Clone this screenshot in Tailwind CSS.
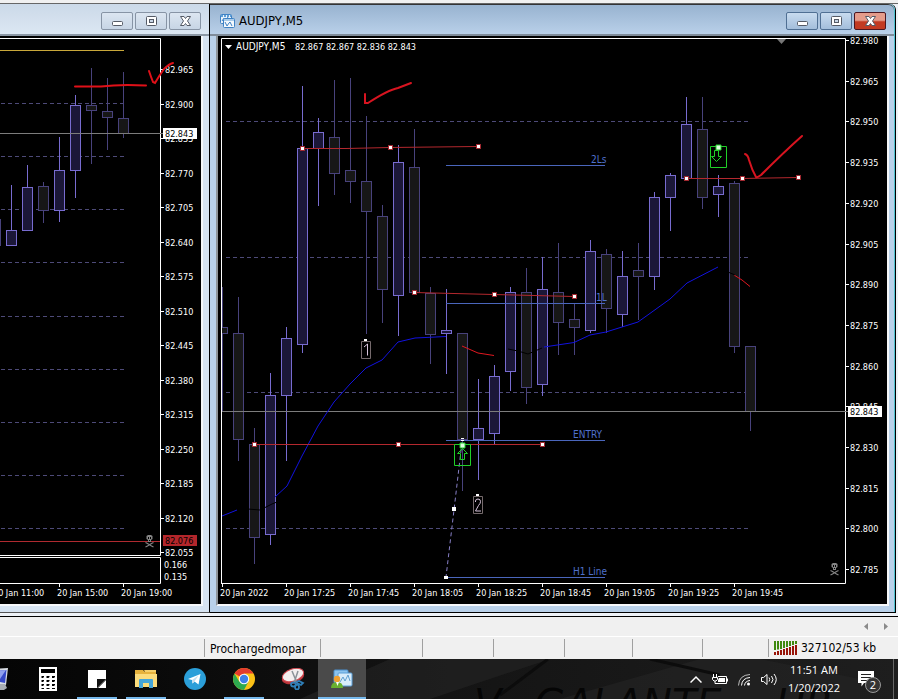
<!DOCTYPE html>
<html lang="en">
<head>
<meta charset="utf-8">
<meta name="viewport" content="width=device-width, initial-scale=1">
<title>AUDJPY,M5</title>
<script src="https://cdn.jsdelivr.net/npm/@tailwindcss/browser@4"></script>
</head>
<body class="flex min-h-screen flex-col overflow-x-hidden bg-[#f0f0f0] font-['DejaVu_Sans_Condensed','DejaVu_Sans',sans-serif] text-black">

<svg class="hidden" aria-hidden="true">
  <defs>
    <symbol id="i-min" viewBox="0 0 13 12"><rect x="1.5" y="6.500" width="10" height="4" rx="1" fill="#fff" stroke="#555b66"/></symbol>
    <symbol id="i-max" viewBox="0 0 13 12"><rect x="1.500" y="1.500" width="10" height="9" rx="1" fill="#fff" stroke="#555b66"/><rect x="4.500" y="4.500" width="4" height="3" fill="#c9d6e6" stroke="#555b66"/></symbol>
    <symbol id="i-close" viewBox="0 0 13 12"><path d="M1.500 1.500h3.500l1.500 2 1.500-2h3.500l-3 4.500 3 4.500H8l-1.500-2-1.500 2H1.500l3-4.500z" fill="#fff" stroke="#555b66"/></symbol>
    <symbol id="i-skull" viewBox="0 0 9 13"><path d="M3 0h3l1.500 1v3L6 5v2H3V5L1.500 4V1z" fill="#858585"/><path d="M3 2h1v2H3zM5 2h1v2H5zM4 5h1v1H4z" fill="#000"/><path d="M.5 7.500l2 1 4 2.500 2 1M8.500 7.500l-2 1-4 2.500-2 1" fill="none" stroke="#858585" stroke-width="1.200"/></symbol>
  </defs>
</svg>

<main class="flex grow flex-col border-b border-black bg-[#eef2f7]">
  <div class="h-1 border-b border-[#666] bg-[#f0f0f0]"></div>
  <div class="grid grid-cols-[210fr_688fr] pb-[3px]">

    <section aria-label="Chart window 1" class="border-r border-b border-r-black border-b-[#555] bg-[#d7e4f2]">
      <header class="flex h-8 items-center justify-end gap-[2px] border-b-2 border-[#8c98a5] bg-linear-to-b from-[#cbd9e8] to-[#dce7f3] pt-1 pr-2">
        <button aria-label="Minimize" class="grid h-[18px] w-8 place-items-center rounded-[2px] border border-[#8794a5] bg-linear-to-b from-[#dce6f1] to-[#c7d5e5]"><svg class="h-3 w-[13px]"><use href="#i-min"/></svg></button>
        <button aria-label="Maximize" class="grid h-[18px] w-8 place-items-center rounded-[2px] border border-[#8794a5] bg-linear-to-b from-[#dce6f1] to-[#c7d5e5]"><svg class="h-3 w-[13px]"><use href="#i-max"/></svg></button>
        <button aria-label="Close" class="grid h-[18px] w-8 place-items-center rounded-[2px] border border-[#8794a5] bg-linear-to-b from-[#dce6f1] to-[#c7d5e5]"><svg class="h-3 w-[13px]"><use href="#i-close"/></svg></button>
      </header>
      <div class="pr-[6px] pb-[6px]">
        <div class="border-r-2 border-b-2 border-[#f6f8fa] bg-black">
          <svg id="left" class="block w-full text-[9px]" viewBox="0 36 201 568" role="img" aria-label="AUDJPY hourly chart">
            <g id="left-data"></g>
            <path d="M0 38.500H160.500V555.500H0M0 557.500H160.500V583.500H0" fill="none" stroke="#fff"/>
            <path d="M0 50.500H124" stroke="#c9a83a"/>
            <path d="M0 133.500H163" stroke="#7c7c7c"/>
            <path d="M0 541.500H160" stroke="#b02a30"/>
            <use href="#i-skull" x="145" y="535" width="9" height="13"/>
            <rect x="163" y="128" width="34" height="11" fill="#fff"/><text x="165" y="137" fill="#000">82.843</text>
            <rect x="163" y="535" width="34" height="11" fill="#b3262b"/><text x="165" y="544" fill="#000">82.076</text>
            <path d="M75 86.500L101 86.500Q120 84 146 85.500M149 71Q151 77 153 82L155 83Q159 76 164 69Q169 64 173 63" fill="none" stroke="#e01018" stroke-width="2" stroke-linecap="round"/>
          </svg>
        </div>
      </div>
    </section>

    <section aria-label="AUDJPY,M5" class="mr-[2px] rounded-tr-md border-r border-b border-black bg-[#b9d1ea]">
      <div class="rounded-tr-md border-r border-[#4fc3d0]">
        <header class="flex h-8 items-center gap-[2px] rounded-tr-md border-t border-b-2 border-t-[#333] border-b-[#7f8c9a] bg-linear-to-b from-[#98b3d0] to-[#b9d0e9] pt-[3px] pr-2 pl-[10px]">
          <svg class="h-[14px] w-[15px]" viewBox="0 0 15 14" aria-hidden="true"><rect x=".5" y=".5" width="11" height="9" rx="1" fill="#e9f2fb" stroke="#3f82c4"/><path d="M2 7l2-3 2 2 2-3" stroke="#3f82c4" fill="none"/><path d="M1 2h10" stroke="#5f9fd8" stroke-width="2" stroke-dasharray="2 1"/><rect x="3.500" y="4.500" width="11" height="9" rx="1" fill="#f4f9fd" stroke="#3f82c4"/><path d="M4 6h10" stroke="#5f9fd8"/><path d="M5 8l2 4 2-3 1-1 2 4" stroke="#3f82c4" fill="none"/></svg>
          <h1 class="grow pl-[2px] text-[13px] leading-4">AUDJPY,M5</h1>
          <button aria-label="Minimize" class="grid h-[18px] w-8 place-items-center rounded-[2px] border border-[#4f6f93] bg-linear-to-b from-[#c8dbef] to-[#a3bedb]"><svg class="h-3 w-[13px]"><use href="#i-min"/></svg></button>
          <button aria-label="Maximize" class="grid h-[18px] w-8 place-items-center rounded-[2px] border border-[#4f6f93] bg-linear-to-b from-[#c8dbef] to-[#a3bedb]"><svg class="h-3 w-[13px]"><use href="#i-max"/></svg></button>
          <button aria-label="Close" class="grid h-[18px] w-8 place-items-center rounded-[2px] border border-[#4c1620] bg-linear-to-b from-[#e59c8b] from-45% to-[#c23a22] to-55%"><svg class="h-3 w-[13px]"><use href="#i-close"/></svg></button>
        </header>
        <div class="pr-[5px] pb-[6px] pl-[6px]">
          <div class="border-r-2 border-b-2 border-l-2 border-[#f6f8fa] border-l-[#8e9499] bg-black">
            <svg id="right" class="block w-full text-[9px]" viewBox="218 36 669 568" role="img" aria-label="AUDJPY five minute chart">
              <g id="right-data"></g>
              <path d="M221.500 583V38.500H845.500V583.500H221" fill="none" stroke="#fff"/>
              <path d="M222 411.500H848" stroke="#7c7c7c"/>
              <path d="M225 45h7l-3.500 4z" fill="#fff"/>
              <text x="236" y="50" font-size="10" fill="#fff">AUDJPY,M5</text><text x="295" y="50" fill="#fff">82.867 82.867 82.836 82.843</text>
              <path d="M777 39h9l-4.500 5z" fill="#777"/>
              <g fill="none" stroke="#1212e0">
                <path d="M222 516L237 510M275 497L287 486L302 456L318 426L334 402L350 384L366 368L382 360L398 342L415 338L446 336.500M544 347L574 342.500L590 335L606 332L638 322L670 299L687 283L718 267"/>
              </g>
              <g fill="none" stroke="#e01820"><path d="M462 346L478 353L494 355.500M734 275L742 280L750 286.500"/></g>
              <path d="M248 509l12 1 12-6 5-2M508 349l10 2 10 3 14-6M728 272l7 3" stroke="#000" fill="none"/>
              <g stroke="#4a66bc"><path d="M446 165.500H605M446 303.500H605M446 440.500H605M446 577.500H605"/></g>
              <g fill="#4f70cc" font-size="10"><text x="591" y="163">2Ls</text><text x="596" y="301">1L</text><text x="573" y="438">ENTRY</text><text x="573" y="575">H1 Line</text></g>
              <g fill="none" stroke="#b4282e"><path d="M302 148.500H346L390 147.500L478 146.500M414 292.500L494 294.500L574 296.500M254 444.500H542M686 178.500H742L798 177.500"/></g>
              <path d="M462 442L454 510L446 577" fill="none" stroke="#8880c8" stroke-dasharray="4 3"/>
              <g fill="none" stroke="#20d028"><path d="M454.500 444.500h16v21h-16zM710.500 146.500h16v21h-16z"/><path d="M462.500 448.500l5 5h-3v6h-4v-6h-3zM716.500 161.500l5-5h-3v-6h-4v6h-3z"/></g>
              <g id="handles" fill="#fff" stroke="#a02830"></g>
              <path d="M460 443h5v5h-5zM716 145h5v5h-5z" fill="#e0ffe0" stroke="#20d028"/>
              <path d="M461 438h3v1h-3zM461 440h3v1h-3zM452 507h4v4h-4zM444 576h4v3h-4zM364 339h3v3h-3zM476 494h3v3h-3z" fill="#fff"/>
              <path d="M361.500 341.500h9v17h-9zM473.500 496.500h9v17h-9z" fill="none" stroke="#756a6c"/>
              <g fill="none" stroke="#d8c4dc"><path d="M364 347l3.500-3V355.500M475.500 502v-1q0-2 2.500-2t2.500 2.500q0 2-2 4l-3 5.500h5.500"/></g>
              <use href="#i-skull" x="830" y="563" width="9" height="13"/>
              <rect x="848" y="406" width="34" height="11" fill="#fff"/><text x="850" y="415" fill="#000">82.843</text>
              <g fill="none" stroke="#d81420" stroke-width="2" stroke-linecap="round"><path d="M365 94V103L368 103Q388 90 398 88L411 83M745 154Q748 155 749 160Q752 170 756 177Q757 178 761 175Q783 153 802 136"/></g>
            </svg>
          </div>
        </div>
      </div>
    </section>
  </div>
</main>

<div class="flex h-5 items-center justify-end gap-3 border-b border-white pr-2">
  <button aria-label="Scroll tabs left" class="grid h-3 w-2 place-items-center"><svg class="h-[7px] w-1" viewBox="0 0 4 7"><path d="M4 0v7L0 3.500z" fill="#8a8a8a"/></svg></button>
  <button aria-label="Scroll tabs right" class="grid h-3 w-2 place-items-center"><svg class="h-[7px] w-1" viewBox="0 0 4 7"><path d="M0 0v7l4-3.500z" fill="#8a8a8a"/></svg></button>
</div>

<footer class="flex h-[22px] items-center text-[12px] leading-5">
  <span class="grow"></span>
  <span class="h-[18px] w-[116px] border-l border-[#a0a0a0] pl-[5px]">Prochargedmopar</span>
  <span class="h-[18px] w-[102px] border-l border-[#a0a0a0]"></span>
  <span class="h-[18px] w-[71px] border-l border-[#a0a0a0]"></span>
  <span class="h-[18px] w-[71px] border-l border-[#a0a0a0]"></span>
  <span class="h-[18px] w-[68px] border-l border-[#a0a0a0]"></span>
  <span class="h-[18px] w-[70px] border-l border-[#a0a0a0]"></span>
  <span class="h-[18px] w-[66px] border-l border-[#a0a0a0]"></span>
  <span class="flex h-[18px] w-[130px] items-center gap-[3px] border-l border-[#a0a0a0] pl-[5px]">
    <svg class="h-[14px] w-6" viewBox="0 0 24 14" aria-hidden="true"><path d="M1 0v9M4 0v8.500M7 0v8M10 0v7M13 0v6M16 0v5M19 0v4M22 0v3" stroke="#3f8a10" stroke-width="2"/><path d="M1 11v3M4 10v4M7 9V14M10 8V14M13 7V14M16 6V14M19 5V14M22 4V14" stroke="#981408" stroke-width="2"/></svg>
    <span>327102/53 kb</span>
  </span>
</footer>

<nav aria-label="Taskbar" class="relative flex h-10 items-stretch overflow-hidden bg-linear-to-r from-[#050505] via-[#141414] to-[#1e1e1e] font-['Open_Sans','Noto_Sans',sans-serif] text-white">
  <svg class="absolute inset-0 h-full w-full" viewBox="0 0 898 40" preserveAspectRatio="none" aria-hidden="true">
    <path d="M390 0L300 40H430L550 0zM560 40L700 0H760L860 20V40z" fill="#242424" opacity=".6"/><path d="M548 0L500 36M650 0L720 16" stroke="#0c0c0c" stroke-width="3"/>
    <g fill="#000" fill-opacity=".75" font-family="DejaVu Sans, sans-serif" font-style="italic" font-size="40"><text x="474" y="59">V</text><text x="534" y="59">GALANTE</text><text x="776" y="59">UR</text></g>
  </svg>
  <button aria-label="This PC" class="relative w-6 overflow-hidden"><svg class="h-10 w-6" viewBox="0 0 24 40"><path d="M-6 10L8 9 6 26-6 24z" fill="#d8dde4"/><path d="M-6 12L6.500 11 5 24-6 22z" fill="#3548c8"/><path d="M-6 12L6 11 0 20-6 22z" fill="#8fa0ee"/><path d="M0 25h5l2 4-3 2H0z" fill="#a8adb4"/></svg></button>
  <div class="relative flex gap-px">
    <button aria-label="Calculator" class="grid w-12 place-items-center"><svg class="h-6 w-[18px]" viewBox="0 0 18 24"><path d="M0 0h18v24H0z" fill="#fff"/><path d="M2 2h14v4H2zM2.500 9H5v1l-1 1H2.500zM7.500 9h3v1l-1 1h-2zM13 9h3v1l-1 1h-2zM2.500 13H5v1l-1 1H2.500zM7.500 13h3v1l-1 1h-2zM13 13h3v1l-1 1h-2zM2.500 17H5v1l-1 1H2.500zM7.500 17h3v1l-1 1h-2zM13 17h3v1l-1 1h-2zM2.500 21H5v1H2.500zM7.500 21h3v1h-3zM13 21h3v1h-3z" fill="#000"/></svg></button>
    <button aria-label="Sticky Notes" class="relative grid w-12 place-items-center"><svg class="h-[18px] w-[18px]" viewBox="0 0 18 18"><path d="M0 0h18v9L9 18H0z" fill="#fff"/><path d="M9 9h9l-9 9z" fill="#111"/><path d="M18 10v8h-8z" fill="#fff"/></svg><span class="absolute inset-x-1 bottom-0 h-[2px] bg-[#76b9ed]"></span></button>
    <button aria-label="File Explorer" class="relative grid w-12 place-items-center"><svg class="h-5 w-[22px]" viewBox="0 0 22 20"><path d="M0 1h8l2 2h11v15H0z" fill="#e6b23c"/><path d="M0 5h22v13H0z" fill="#fbdc7c"/><path d="M4 11q0-1 1-1h12q1 0 1 1v8h-4v-5H8v5H4z" fill="#45a5d8"/><path d="M9 1h12v2H10z" fill="#f5cf6a"/></svg><span class="absolute inset-x-1 bottom-0 h-[2px] bg-[#76b9ed]"></span></button>
    <button aria-label="Telegram" class="grid w-12 place-items-center"><svg class="h-[22px] w-[22px]" viewBox="0 0 22 22"><circle cx="11" cy="11" r="11" fill="#2b9fd9"/><path d="M4 11L16.500 6 14.500 16.500 10.500 13.500 8.500 15.500 8 12z" fill="#fff"/><path d="M8 12l6.500-4.500-4 6-2 2z" fill="#c4dff0"/></svg></button>
    <button aria-label="Google Chrome" class="relative grid w-12 place-items-center"><svg class="h-[22px] w-[22px]" viewBox="0 0 22 22"><circle cx="11" cy="11" r="11" fill="#fbc116"/><path d="M11 11L1.500 5.500A11 11 0 0 1 20.500 5.500H11z" fill="#e33b2e"/><path d="M1.500 5.500A11 11 0 0 0 11 22L15.500 13.500 11 11 6.300 13.700z" fill="#2da94f"/><circle cx="11" cy="11" r="5.200" fill="#fff"/><circle cx="11" cy="11" r="4.200" fill="#3f7fe8"/></svg><span class="absolute inset-x-1 bottom-0 h-[2px] bg-[#76b9ed]"></span></button>
    <button aria-label="Snipping Tool" class="grid w-12 place-items-center"><svg class="h-[22px] w-6" viewBox="0 0 24 22"><ellipse cx="12" cy="9" rx="11.500" ry="6.500" transform="rotate(-18 12 9)" fill="#b9343a"/><ellipse cx="12" cy="7" rx="11" ry="6" transform="rotate(-18 12 7)" fill="#f3eeee" stroke="#d04850"/><path d="M11 3l5 12M17 3l-4 12" stroke="#8c9298" stroke-width="1.500"/><g fill="none" stroke="#2f7fb8" stroke-width="1.800"><ellipse cx="12.500" cy="16.500" rx="2.500" ry="2"/><ellipse cx="16" cy="19" rx="2" ry="2.500"/><path d="M15 14l3-1 4 2-2 2-4-2"/></g></svg></button>
    <button aria-label="MetaTrader 4" class="relative grid w-12 place-items-center bg-[#4a4a4a]"><svg class="h-5 w-[22px]" viewBox="0 0 22 20"><rect x="3" y="1" width="14" height="13" rx="1" fill="#8cc4ee" stroke="#4a90d0"/><rect x="7" y="4" width="14" height="13" rx="1" fill="#d8ecfa" stroke="#5a9fd8"/><path d="M9 13l3-5 2 4 3-6 2 6" fill="none" stroke="#5f9fd0"/><circle cx="6" cy="10" r="3.200" fill="#f0a030"/><path d="M0 19q0-6 6-6t6 6z" fill="#68b030"/><path d="M5 13l1.500 4L8 13z" fill="#fff"/></svg><span class="absolute inset-x-0 bottom-0 h-[2px] bg-[#76b9ed]"></span></button>
  </div>
  <div class="relative ml-auto flex items-center gap-[10px] pr-1">
    <button aria-label="Show hidden icons"><svg class="h-[9px] w-3" viewBox="0 0 12 9"><path d="M.5 7.500L6 2l5.500 5.500" fill="none" stroke="#fff" stroke-width="1.500"/></svg></button>
    <button aria-label="Battery"><svg class="h-[11px] w-4" viewBox="0 0 16 11"><path d="M1.500 0v3M4.500 0v3M.5 3.500h5v2L4 7H2L.5 5.500zM3 7v2.500h3" fill="none" stroke="#fff"/><path d="M6 2.500h8.500v7h-9" fill="none" stroke="#fff"/><path d="M7 4h6v4H6V6zM15 4.500h1v3h-1z" fill="#fff"/></svg></button>
    <button aria-label="Network"><svg class="h-[13px] w-[13px]" viewBox="0 0 13 13"><g fill="none" stroke="#bbb"><path d="M.5 12.500Q1 2 12 1.500"/><path d="M3.500 12.500Q4 5 12 4.500" stroke="#fff"/><path d="M6.500 12.500Q7 8 12 7.500" stroke="#fff"/></g><circle cx="10.500" cy="11" r="1.500" fill="#fff"/></svg></button>
    <button aria-label="Volume"><svg class="h-[13px] w-[17px]" viewBox="0 0 17 13"><path d="M.5 4.500h2l3.500-3v10l-3.500-3h-2z" fill="none" stroke="#fff"/><path d="M8 4.500q1.500 2 0 4M10.500 3q3 3.500 0 7M13 1q4.500 5.500 0 11" fill="none" stroke="#fff"/></svg></button>
    <time datetime="2022-01-20T11:51" class="flex flex-col text-center text-[11px] leading-[18px]"><span>11:51 AM</span><span>1/20/2022</span></time>
    <button aria-label="2 notifications" class="relative ml-2 mr-5 w-4"><svg class="h-4 w-4" viewBox="0 0 16 16"><path d="M0 0h16v12H6l-2.500 3.500V12H0z" fill="#fff"/><path d="M3 3.500h10M3 6.500h10M3 9.500h6" stroke="#222"/></svg><span class="absolute top-[6px] left-[7px] grid size-4 place-items-center rounded-full border border-[#999] bg-[#333] text-[11px] leading-3">2</span></button>
  </div>
  <span class="absolute inset-y-0 right-1 w-px bg-[#666]"></span>
</nav>

<script>
// candle: [centre x, high, open/close top, open/close bottom, low, rising]
const left = [[-5,219,219,245,245,0],[11,185,230,245,245,1],[27,165,187,230,230,1],[43,182,186,210,223,0],[59,137,170,210,222,1],[75,95,105,170,198,1],[91,68,105,110,164,0],[107,78,111,117,150,0],[123,72,118,133,138,0]];
const right = [[222,287,327,333,411,0],[238,297,333,439,461,0],[254,428,444,537,564,0],[270,373,395,534,545,1],[286,327,338,395,461,1],[302,86,148,344,353,1],[318,118,132,148,206,1],[334,80,137,173,195,0],[350,78,170,181,203,0],[366,116,181,211,334,0],[382,205,216,289,323,0],[398,145,162,295,336,1],[414,129,167,292,292,0],[430,287,293,334,364,0],[446,289,330,333,374,1],[462,333,333,439,491,0],[478,379,428,439,480,1],[494,365,376,433,445,1],[510,287,292,371,391,1],[526,268,292,387,404,0],[542,257,289,384,396,1],[558,243,292,322,355,0],[574,303,319,327,355,0],[590,240,251,330,333,1],[606,249,254,308,333,0],[622,251,276,314,327,1],[638,243,270,276,320,0],[654,192,197,276,290,1],[670,173,175,197,231,1],[686,97,124,178,181,1],[702,97,129,197,209,0],[718,175,186,194,217,1],[734,181,183,346,353,0],[750,346,346,411,431,0]];

const grid = (x1, x2, ys) => ys.map(y => `<path d="M${x1} ${y + .5}H${x2}" stroke="#4d4a78" stroke-dasharray="4 3"/>`).join('');
const candles = list => list.map(([x, hi, top, bot, lo, up]) => {
  const c = up ? '#786cd0' : '#48427c';
  return `<path d="M${x + .5} ${hi}V${lo}" stroke="${c}"/><rect x="${x - 4.5}" y="${top + .5}" width="10" height="${bot - top}" fill="${up ? '#1b1738' : '#171717'}" stroke="${c}"/>`;
}).join('');
const scale = (x, y0, dy, v0, dv, n) => Array.from({ length: n }, (_, i) => {
  const y = Math.round(y0 + dy * i);
  return `<path d="M${x} ${y + .5}h3" stroke="#fff"/><text x="${x + 4}" y="${y + 4}" fill="#fff">${(v0 - dv * i).toFixed(3)}</text>`;
}).join('');
const times = (x0, labels) => labels.map((t, i) => `<path d="M${x0 + 64 * i + .5} 583v4" stroke="#fff"/><text x="${x0 + 64 * i - 2}" y="596" fill="#fff">${t}</text>`).join('');

document.getElementById('left-data').innerHTML =
  grid(1, 126, [103, 156, 209, 262, 316, 369, 422, 475, 528]) + candles(left) +
  scale(161, 69, 34.5, 82.965, .065, 15) +
  '<text x="164" y="568" fill="#fff">0.166</text><text x="164" y="580" fill="#fff">0.135</text>' +
  times(-5, ['20 Jan 11:00', '20 Jan 15:00', '20 Jan 19:00']);
document.getElementById('right-data').innerHTML =
  grid(226, 751, [121, 257, 392, 528]) +
  candles(right) + '<path d="M218 36h3v568h-3z"/>' +
  scale(846, 40, 40.7, 82.98, .015, 14) +
  times(222, ['20 Jan 2022', '20 Jan 17:25', '20 Jan 17:45', '20 Jan 18:05', '20 Jan 18:25', '20 Jan 18:45', '20 Jan 19:05', '20 Jan 19:25', '20 Jan 19:45']);
document.getElementById('handles').innerHTML =
  [[302,148],[390,147],[478,146],[414,292],[494,294],[574,296],[254,444],[398,444],[542,444],[686,178],[742,178],[798,177]]
    .map(([x, y]) => `<rect x="${x - 1.5}" y="${y - 1.5}" width="4" height="4"/>`).join('');
</script>
</body>
</html>
